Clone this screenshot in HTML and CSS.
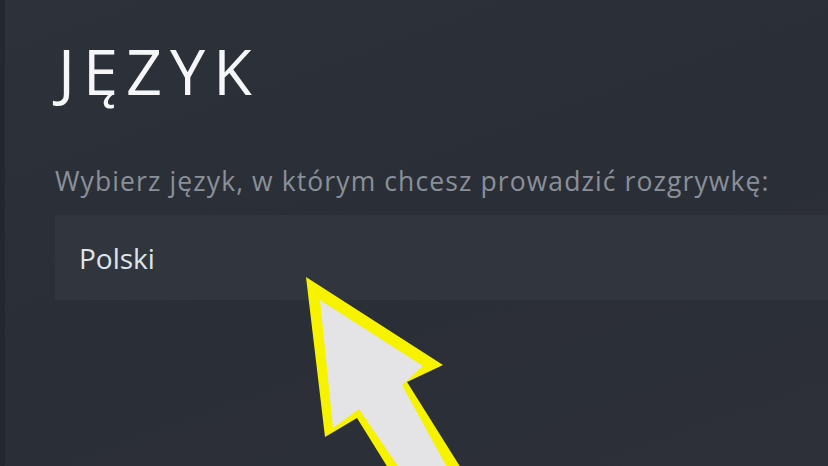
FILE: index.html
```html
<!DOCTYPE html>
<html lang="pl">
<head>
<meta charset="utf-8">
<link rel="stylesheet" href="styles.css">
</head>
<body>
<div class="page">
  <div class="edge"></div>
  <div class="content">
    <h1 class="title">JĘZYK</h1>
    <div class="label">Wybierz język, w którym chcesz prowadzić rozgrywkę:</div>
    <div class="select">Polski</div>
  </div>
  <svg class="arrow" width="828" height="466" viewBox="0 0 828 466">
    <polygon points="306,277 443,365 407,382 481,500 408,500 357,418 325,437" fill="#f6f200"/>
    <polygon points="320,300 423,366 402,385 465,500 421,500 359,409 333,428" fill="#e4e4e6"/>
  </svg>
</div>
</body>
</html>
```
FILE: styles.css
```css
html, body {
  margin: 0;
  padding: 0;
}
body {
  width: 828px;
  height: 466px;
  overflow: hidden;
  background: #2b3038;
  font-family: "Open Sans", "Liberation Sans", sans-serif;
}
.page {
  position: relative;
  width: 828px;
  height: 466px;
  display: flex;
  background: linear-gradient(160deg, #2d323a 0%, #2a2e36 50%, #2d3039 100%);
}
.edge {
  width: 5px;
  background: #24272d;
  flex: none;
}
.content {
  flex: 1;
  padding-left: 50px;
  padding-top: 33px;
}
.title {
  margin: 0 0 0 3px;
  font-weight: 500;
  font-size: 63px;
  line-height: 76px;
  letter-spacing: 8px;
  color: #f4f6f8;
  font-family: "Open Sans", sans-serif;
}
.label {
  margin-top: 55px;
  font-size: 26.5px;
  line-height: 34px;
  letter-spacing: 1.1px;
  color: #8a9098;
  white-space: nowrap;
}
.select {
  margin-top: 17px;
  height: 85px;
  background: #31363e;
  display: flex;
  align-items: center;
  padding-left: 24px;
  font-size: 28px;
  color: #dfe4e8;
}
.arrow {
  position: absolute;
  left: 0;
  top: 0;
}
```
